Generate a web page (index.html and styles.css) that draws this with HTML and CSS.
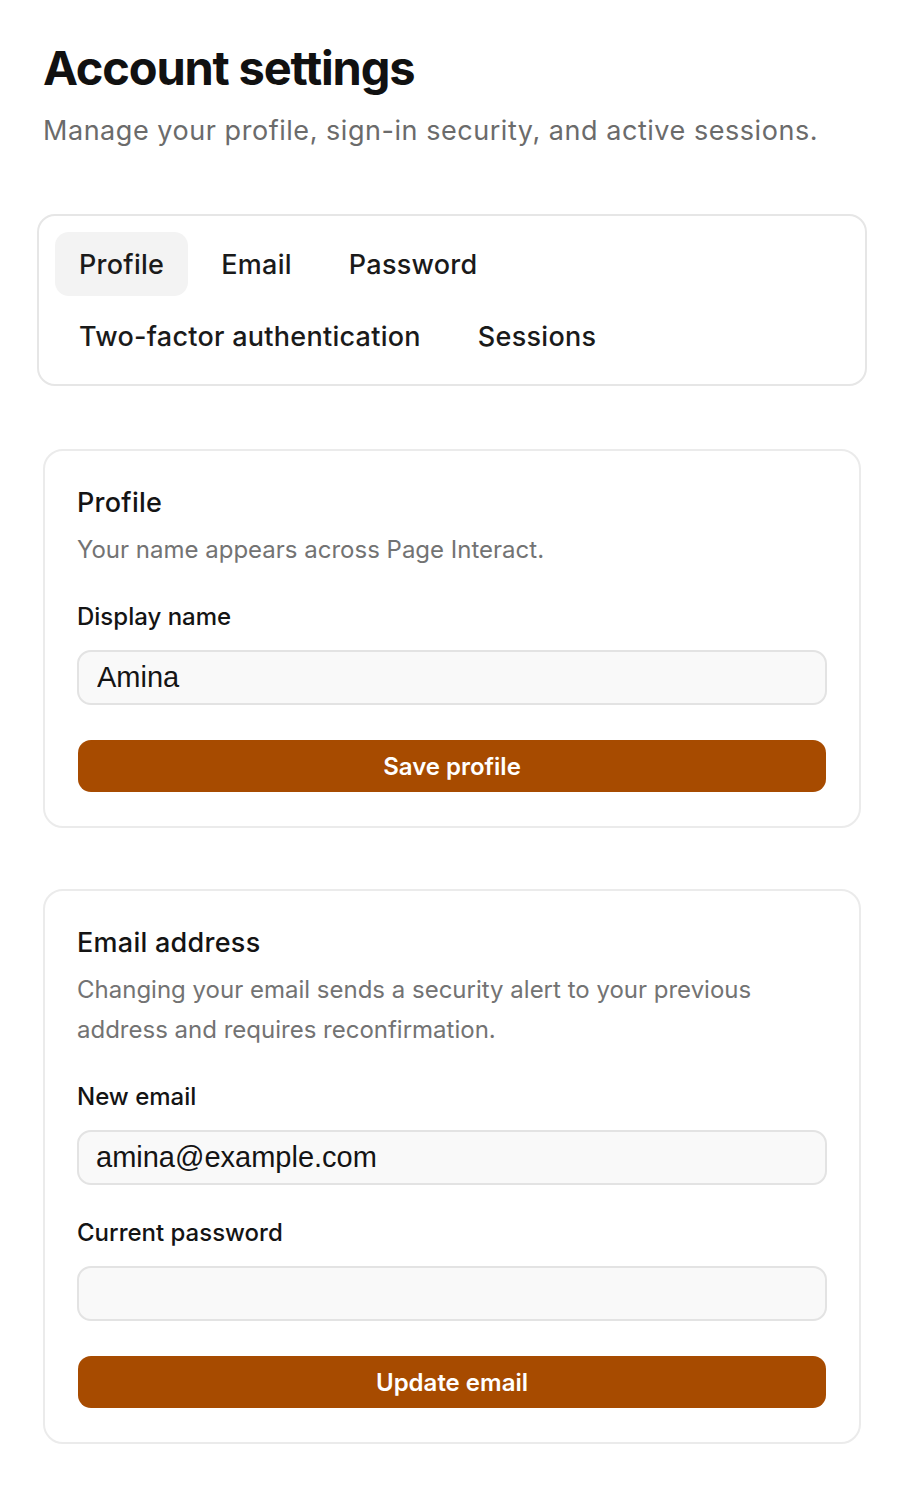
FILE: index.html
```html
<!DOCTYPE html>
<html lang="en">
<head>
<meta charset="utf-8">
<title>Account settings</title>
<link rel="stylesheet" href="styles.css">
</head>
<body>
<main class="page">
  <header class="page-header">
    <h1 class="title">Account settings</h1>
    <p class="subtitle">Manage your profile, sign-in security, and active sessions.</p>
  </header>

  <nav class="tabs">
    <button class="tab tab-active">Profile</button>
    <button class="tab">Email</button>
    <button class="tab">Password</button>
    <button class="tab">Two-factor authentication</button>
    <button class="tab">Sessions</button>
  </nav>

  <section class="card">
    <h2 class="card-title">Profile</h2>
    <p class="card-desc">Your name appears across Page Interact.</p>
    <label class="field-label" for="display-name">Display name</label>
    <input class="field-input" id="display-name" type="text" value="Amina">
    <button class="primary-btn">Save profile</button>
  </section>

  <section class="card">
    <h2 class="card-title">Email address</h2>
    <p class="card-desc">Changing your email sends a security alert to your previous address and requires reconfirmation.</p>
    <label class="field-label" for="new-email">New email</label>
    <input class="field-input field-email" id="new-email" type="email" value="amina@example.com">
    <label class="field-label field-label-gap" for="current-password">Current password</label>
    <input class="field-input" id="current-password" type="password" value="">
    <button class="primary-btn">Update email</button>
  </section>
</main>
</body>
</html>
```

FILE: styles.css
```css
* { box-sizing: border-box; }

html, body {
  margin: 0;
  padding: 0;
  background: #ffffff;
}

body {
  font-family: Inter, "Noto Sans", sans-serif;
  color: #141414;
}

.page {
  padding: 40px 47px 40px 43px;
  display: flex;
  flex-direction: column;
}

.title {
  margin: 0;
  font-size: 47px;
  line-height: 56px;
  font-weight: 700;
  letter-spacing: -0.025em;
  color: #111111;
}

.subtitle {
  margin: 18px 0 0;
  font-size: 27px;
  line-height: 34px;
  color: #6b6b6b;
  letter-spacing: 0.02em;
}

.tabs {
  margin: 66px -6px 0;
  border: 2px solid #e6e6e6;
  border-radius: 18px;
  padding: 16px 16px;
  display: flex;
  flex-wrap: wrap;
  gap: 8px 9px;
}

.tab {
  font-family: inherit;
  font-size: 27px;
  font-weight: 500;
  color: #1a1a1a;
  background: transparent;
  border: none;
  border-radius: 14px;
  height: 64px;
  padding: 0 24px;
  cursor: pointer;
  letter-spacing: 0.01em;
}

.tab-active {
  background: #f3f3f3;
}

.card {
  margin-top: 63px;
  border: 2px solid #ebebeb;
  border-radius: 20px;
  padding: 33px 32px 34px;
  display: flex;
  flex-direction: column;
}

.card + .card {
  margin-top: 61px;
}

.card-title {
  margin: 0;
  font-size: 27px;
  line-height: 38px;
  font-weight: 500;
  letter-spacing: 0.01em;
  color: #141414;
}

.card-desc {
  margin: 8px 0 0;
  font-size: 24px;
  line-height: 40px;
  color: #737373;
}

.field-label {
  margin-top: 31px;
  font-size: 24px;
  line-height: 32px;
  font-weight: 500;
  color: #141414;
}

.field-label-gap {
  margin-top: 32px;
}

.field-input {
  margin-top: 17px;
  height: 55px;
  width: 100%;
  border: 2px solid #e3e3e3;
  border-radius: 14px;
  background: #f9f9f9;
  padding: 0 18px;
  font-family: "Liberation Sans", Arial, sans-serif;
  font-size: 29px;
  color: #141414;
}

.field-email {
  padding-left: 17px;
}

.primary-btn {
  margin: 35px 1px 0;
  height: 52px;
  border: none;
  border-radius: 13px;
  background: #a74b00;
  color: #ffffff;
  font-family: inherit;
  font-size: 24px;
  font-weight: 600;
  cursor: pointer;
}
```
